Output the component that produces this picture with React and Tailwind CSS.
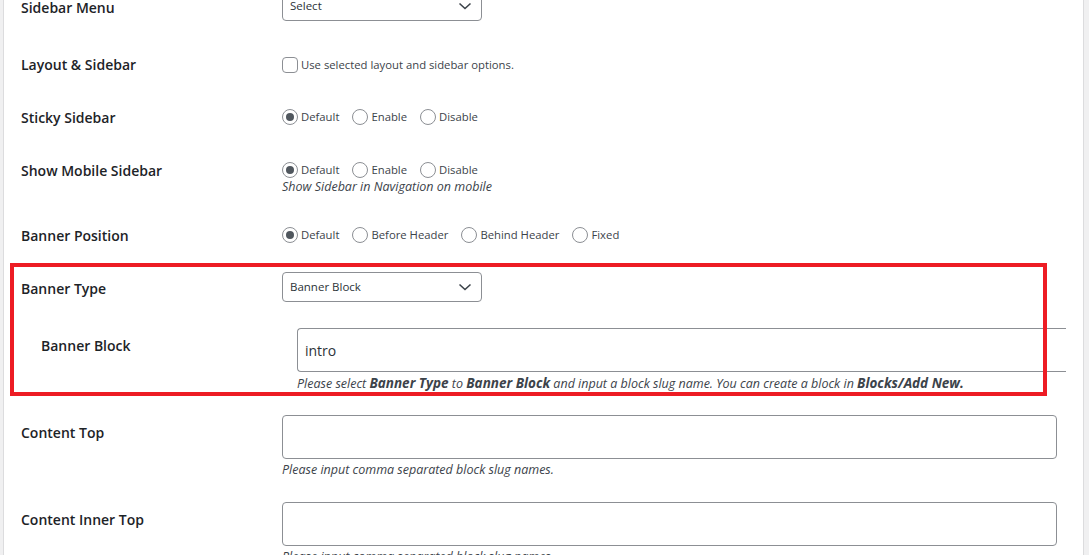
import React from 'react';

const font = { fontFamily: '"Open Sans", "Noto Sans", sans-serif' };

function Radio({ checked, label }) {
  return (
    <label className="flex items-center gap-[3px] mr-[13px]">
      <span className="w-4 h-4 rounded-full border border-[#8c8f94] bg-white flex items-center justify-center">
        {checked && <span className="w-2 h-2 rounded-full bg-[#50575e]" />}
      </span>
      <span className="text-[11.3px] leading-4 text-[#3c434a]">{label}</span>
    </label>
  );
}

function Select({ value }) {
  return (
    <div className="w-[200px] h-[30px] border border-[#8c8f94] rounded-[4px] bg-white flex items-center justify-between pl-[7px] pr-[9px]">
      <span className="text-[11.5px] text-[#2c3338]">{value}</span>
      <svg width="14" height="8" viewBox="0 0 14 8" fill="none">
        <path d="M1.5 1.5 L7 6.5 L12.5 1.5" stroke="#3c434a" strokeWidth="1.6" />
      </svg>
    </div>
  );
}

function Label({ children, className = '' }) {
  return (
    <div className={`w-[261px] shrink-0 text-[14px] leading-4 font-semibold text-[#1d2327] ${className}`}>
      {children}
    </div>
  );
}

function Desc({ children, className = '' }) {
  return <p className={`text-[12.5px] leading-4 italic text-[#3c434a] ${className}`}>{children}</p>;
}

export default function App() {
  return (
    <div className="w-[1089px] h-[555px] overflow-hidden bg-[#f0f0f1] relative" style={font}>
      <div className="ml-[3px] w-[1081px] h-full bg-white border-l border-r border-[#dcdcde] pl-[17px] overflow-hidden">
        {/* Sidebar Menu */}
        <div className="flex items-start h-[40px]">
          <Label>Sidebar Menu</Label>
          <div className="-mt-[9px]">
            <Select value="Select" />
          </div>
        </div>

        {/* Layout & Sidebar */}
        <div className="flex items-start h-[52px]">
          <Label className="pt-[17px]">Layout &amp; Sidebar</Label>
          <label className="mt-[17px] flex items-center gap-[3px]">
            <span className="w-4 h-4 rounded-[4px] border border-[#8c8f94] bg-white" />
            <span className="text-[11.3px] leading-4 text-[#3c434a]">Use selected layout and sidebar options.</span>
          </label>
        </div>

        {/* Sticky Sidebar */}
        <div className="flex items-start h-[53px]">
          <Label className="pt-[18px]">Sticky Sidebar</Label>
          <div className="mt-[17px] flex">
            <Radio checked label="Default" />
            <Radio label="Enable" />
            <Radio label="Disable" />
          </div>
        </div>

        {/* Show Mobile Sidebar */}
        <div className="flex items-start h-[65px]">
          <Label className="pt-[18px]">Show Mobile Sidebar</Label>
          <div className="mt-[17px]">
            <div className="flex">
              <Radio checked label="Default" />
              <Radio label="Enable" />
              <Radio label="Disable" />
            </div>
            <Desc className="mt-[1px]">Show Sidebar in Navigation on mobile</Desc>
          </div>
        </div>

        {/* Banner Position */}
        <div className="flex items-start h-[53px]">
          <Label className="pt-[18px]">Banner Position</Label>
          <div className="mt-[17px] flex">
            <Radio checked label="Default" />
            <Radio label="Before Header" />
            <Radio label="Behind Header" />
            <Radio label="Fixed" />
          </div>
        </div>

        {/* Banner Type */}
        <div className="flex items-start h-[56px]">
          <Label className="pt-[18px]">Banner Type</Label>
          <div className="mt-[9px]">
            <Select value="Banner Block" />
          </div>
        </div>

        {/* Banner Block */}
        <div className="flex items-start h-[87px]">
          <Label className="pt-[19px] pl-[20px]">Banner Block</Label>
          <div className="mt-[9px] ml-[15px] w-[769px]">
            <div className="h-[44px] border border-r-0 border-[#8c8f94] rounded-l-[4px] bg-white flex items-center pl-[7px] text-[14px] text-[#2c3338]">
              intro
            </div>
            <Desc className="mt-[3px] whitespace-nowrap">
              Please select <b className="text-[13.5px]">Banner Type</b> to <b className="text-[13.5px]">Banner Block</b> and input a block slug name. You can create a block in <b className="text-[13.5px]">Blocks/Add New.</b>
            </Desc>
          </div>
        </div>

        {/* Content Top */}
        <div className="flex items-start h-[87px]">
          <Label className="pt-[19px]">Content Top</Label>
          <div className="mt-[9px] w-[775px]">
            <div className="h-[44px] border border-[#8c8f94] rounded-[4px] bg-white" />
            <Desc className="mt-[3px]">Please input comma separated block slug names.</Desc>
          </div>
        </div>

        {/* Content Inner Top */}
        <div className="flex items-start h-[87px]">
          <Label className="pt-[19px]">Content Inner Top</Label>
          <div className="mt-[9px] w-[775px]">
            <div className="h-[44px] border border-[#8c8f94] rounded-[4px] bg-white" />
            <Desc className="mt-[3px]">Please input comma separated block slug names.</Desc>
          </div>
        </div>
      </div>

      {/* red annotation box */}
      <div className="absolute left-[10px] top-[263px] w-[1037px] h-[133px] border-4 border-[#ed1c24] pointer-events-none" />
    </div>
  );
}
